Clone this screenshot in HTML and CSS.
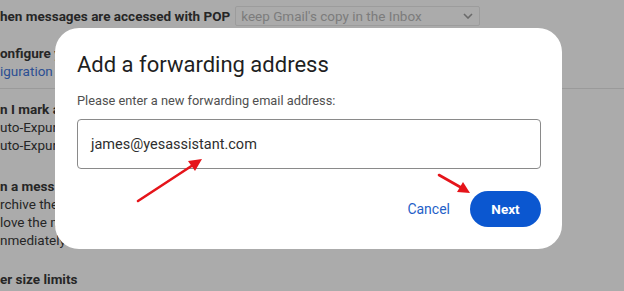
FILE: index.html
```html
<!DOCTYPE html>
<html>
<head>
<meta charset="utf-8">
<link rel="stylesheet" href="styles.css">
</head>
<body>
<div class="page">
  <div class="bg">
    <div class="row-pop">
      <span class="bold">hen messages are accessed with POP</span>
      <div class="select"><span>keep Gmail's copy in the Inbox</span>
        <svg class="chev" width="10" height="6" viewBox="0 0 10 6"><path d="M1 1l4 4 4-4" fill="none" stroke="#6a6a6a" stroke-width="1.6"/></svg>
      </div>
    </div>
    <div class="sec s2">
      <div class="bold">onfigure y</div>
      <div class="link">iguration</div>
    </div>
    <div class="sep"></div>
    <div class="sec s3">
      <div class="bold">n I mark a</div>
      <div>uto-Expur</div>
      <div>uto-Expur</div>
    </div>
    <div class="sec s4">
      <div class="bold">n a mess</div>
      <div>rchive the</div>
      <div>love the m</div>
      <div>nmediately</div>
    </div>
    <div class="sec s5">
      <div class="bold">er size limits</div>
    </div>
  </div>

  <div class="dialog">
    <h1 class="title">Add a forwarding address</h1>
    <p class="sub">Please enter a new forwarding email address:</p>
    <div class="input">james@yesassistant.com</div>
    <div class="actions">
      <span class="cancel">Cancel</span>
      <span class="next">Next</span>
    </div>
  </div>

  <svg class="arrows" width="624" height="291" viewBox="0 0 624 291">
    <line x1="138" y1="201" x2="193" y2="165" stroke="#e5141a" stroke-width="2.6" stroke-linecap="round"/>
    <polygon points="202,159 188,161 195,171" fill="#e5141a"/>
    <line x1="439" y1="175" x2="461" y2="187.5" stroke="#e5141a" stroke-width="2.6" stroke-linecap="round"/>
    <polygon points="470,193 457,192 463,182" fill="#e5141a"/>
  </svg>
</div>
</body>
</html>
```

FILE: styles.css
```css
html, body {
  margin: 0;
  padding: 0;
}
body {
  background: #ababab;
  font-family: Roboto, "Liberation Sans", Arial, sans-serif;
  color: #222;
  width: 624px;
  height: 291px;
  overflow: hidden;
}
.page {
  position: relative;
  width: 624px;
  height: 291px;
  overflow: hidden;
}
.bg {
  font-size: 13.5px;
  line-height: 18px;
  color: #262626;
}
.bold {
  font-weight: 700;
}
.row-pop {
  display: flex;
  align-items: center;
  gap: 5px;
  padding-top: 6px;
  height: 20px;
}
.select {
  width: 232px;
  height: 18px;
  border: 1px solid #9c9c9c;
  border-radius: 2px;
  display: flex;
  align-items: center;
  justify-content: space-between;
  padding: 0 6px 0 5px;
  box-sizing: content-box;
  color: #7c7c7c;
  font-size: 13.5px;
}
.chev {
  margin-right: 0;
}
.s2 {
  margin-top: 18px;
}
.link {
  color: #2c4f93;
}
.sep {
  margin-top: 8px;
  height: 1px;
  background: #9a9a9a;
}
.s3 {
  margin-top: 11px;
}
.s4 {
  margin-top: 23px;
}
.s5 {
  margin-top: 21px;
}
.dialog {
  position: absolute;
  left: 55px;
  top: 28px;
  width: 507px;
  height: 221px;
  box-sizing: border-box;
  background: #fff;
  border-radius: 24px;
  padding: 23px 21px 0 22px;
}
.title {
  margin: 0;
  font-weight: 400;
  font-size: 22px;
  line-height: 28px;
  color: #1f1f1f;
}
.sub {
  margin: 14px 0 0;
  font-size: 12.8px;
  line-height: 16px;
  color: #505050;
}
.input {
  margin-top: 10px;
  height: 50px;
  box-sizing: border-box;
  border: 1px solid #8a8a8a;
  border-radius: 4px;
  padding: 0 13px;
  display: flex;
  align-items: center;
  font-size: 14.5px;
  color: #2e2e2e;
}
.actions {
  margin-top: 22px;
  display: flex;
  justify-content: flex-end;
  align-items: center;
  gap: 20px;
}
.cancel {
  color: #1f5fc8;
  font-size: 14px;
  font-weight: 400;
}
.next {
  width: 71px;
  height: 36px;
  border-radius: 18px;
  background: #0b57d0;
  color: #fff;
  font-weight: 700;
  font-size: 13.5px;
  display: flex;
  align-items: center;
  justify-content: center;
}
.arrows {
  position: absolute;
  left: 0;
  top: 0;
}
```
